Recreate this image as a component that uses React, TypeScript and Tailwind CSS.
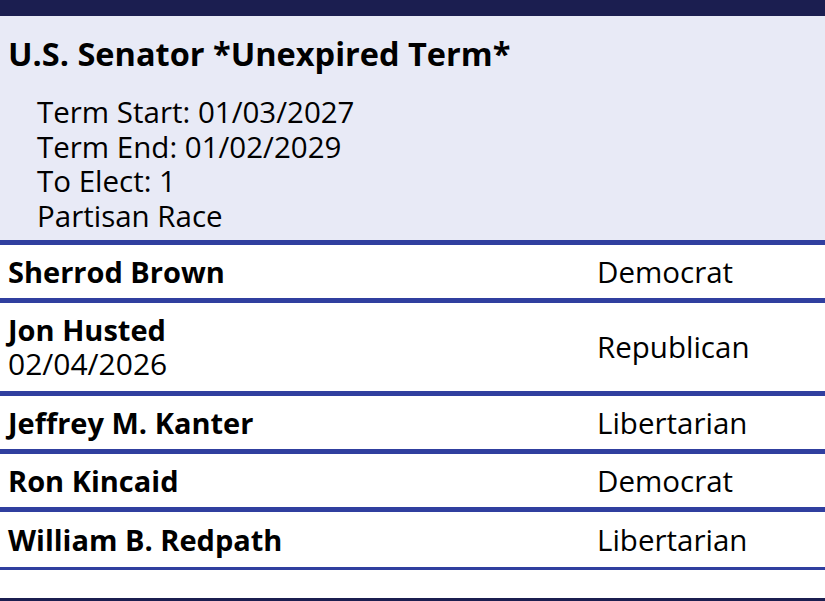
import React from 'react';

type Candidate = {
  name: string;
  party: string;
  note?: string;
};

const candidates: Candidate[] = [
  { name: 'Sherrod Brown', party: 'Democrat' },
  { name: 'Jon Husted', party: 'Republican', note: '02/04/2026' },
  { name: 'Jeffrey M. Kanter', party: 'Libertarian' },
  { name: 'Ron Kincaid', party: 'Democrat' },
  { name: 'William B. Redpath', party: 'Libertarian' },
];

const CandidateRow: React.FC<{ candidate: Candidate; last: boolean }> = ({ candidate, last }) => (
  <div
    className={`flex items-center bg-white pl-[8px] border-[#303f9f] ${
      candidate.note ? 'h-[93px]' : 'h-[58px]'
    } ${last ? 'h-[55px] border-b-[3px]' : 'border-b-[5px]'}`}
  >
    <div className="flex-1">
      <div className="font-bold text-[29px] leading-[34px]">{candidate.name}</div>
      {candidate.note && <div className="text-[30px] leading-[34px]">{candidate.note}</div>}
    </div>
    <div className="w-[228px] text-[29.5px] leading-[34px]">{candidate.party}</div>
  </div>
);

const App: React.FC = () => {
  return (
    <div className="w-[825px] h-[601px] flex flex-col bg-white text-black font-['Open_Sans',sans-serif] overflow-hidden">
      <div className="h-[16px] shrink-0 bg-[#1b1e50]" />
      <div className="bg-[#e8eaf6] h-[229px] shrink-0 pl-[8px] pt-[16px] border-b-[5px] border-[#303f9f]">
        <h1 className="font-bold text-[32.5px] leading-[44px]">U.S. Senator *Unexpired Term*</h1>
        <div className="pl-[29px] pt-[19px] text-[29.5px] leading-[34.5px]">
          <div>Term Start: 01/03/2027</div>
          <div>Term End: 01/02/2029</div>
          <div>To Elect: 1</div>
          <div>Partisan Race</div>
        </div>
      </div>
      {candidates.map((c, i) => (
        <CandidateRow key={c.name} candidate={c} last={i === candidates.length - 1} />
      ))}
      <div className="flex-1 bg-white" />
      <div className="h-[3px] shrink-0 bg-[#1b1e50]" />
    </div>
  );
};

export default App;
